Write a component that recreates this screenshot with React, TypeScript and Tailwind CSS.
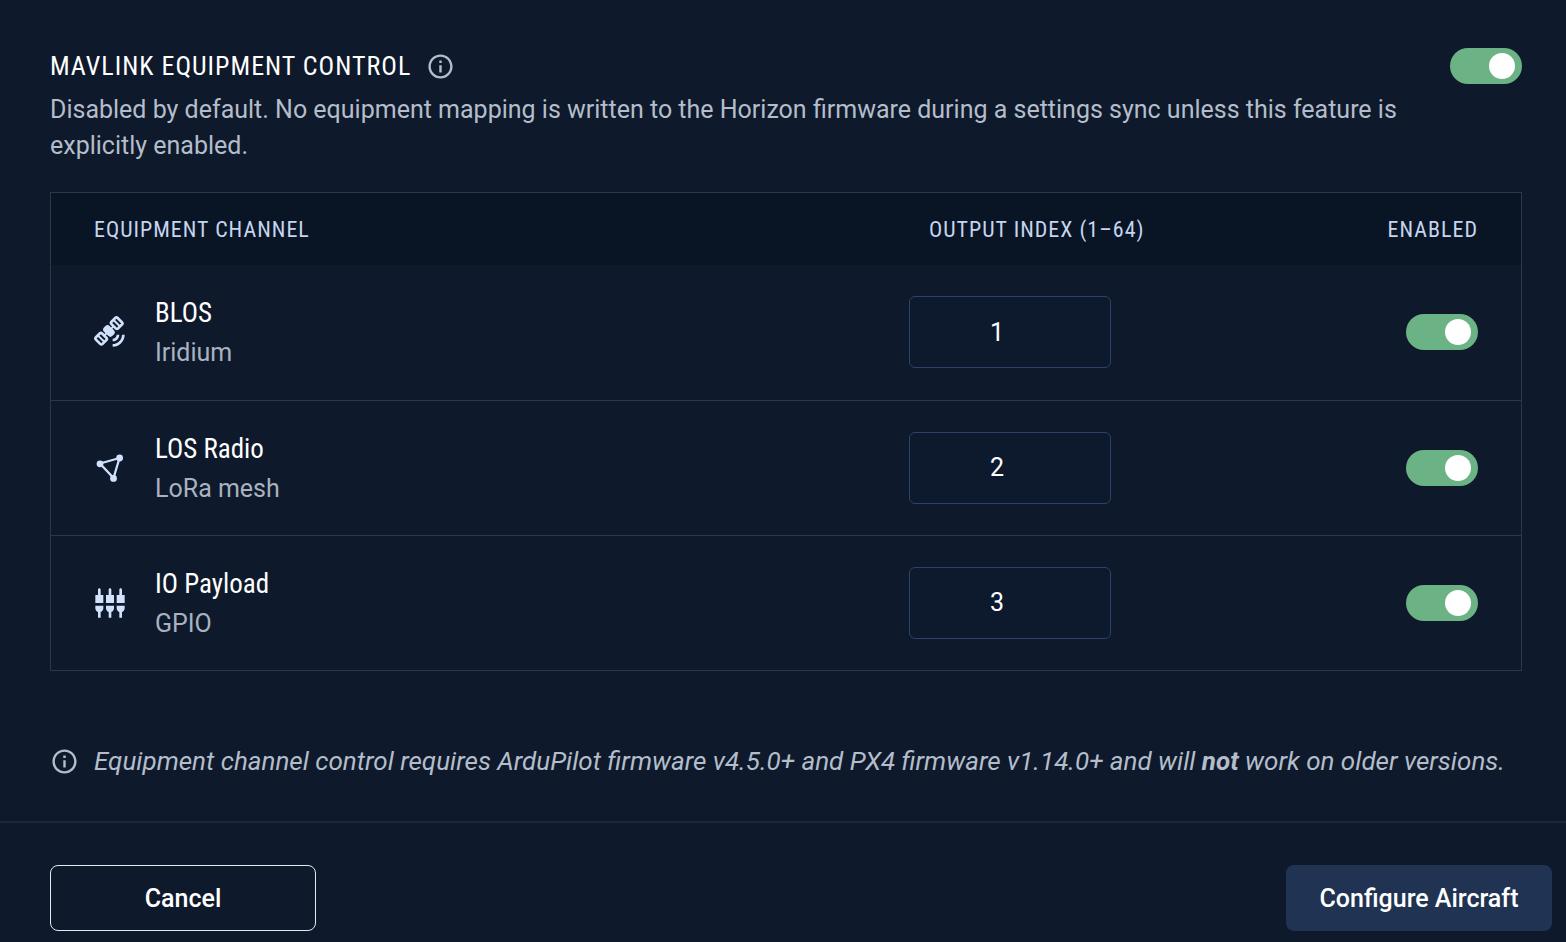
import { useState } from "react";
import type { ReactNode } from "react";
import { MdInfoOutline, MdSatelliteAlt, MdSettingsInputComponent } from "react-icons/md";

type Channel = {
  id: string;
  name: string;
  detail: string;
  index: string;
  icon: ReactNode;
};

function MeshIcon() {
  return (
    <svg viewBox="0 0 32 32" className="size-8" fill="none" stroke="currentColor" strokeWidth="2.2">
      <path d="M6 11.5 25.5 6 19.5 26Z" />
      <g fill="currentColor" stroke="none">
        <circle cx="6" cy="11.8" r="3.4" />
        <circle cx="25.6" cy="6" r="3.4" />
        <circle cx="19.5" cy="26.4" r="3.4" />
      </g>
    </svg>
  );
}

const channels: Channel[] = [
  { id: "blos", name: "BLOS", detail: "Iridium", index: "1", icon: <MdSatelliteAlt className="size-8" /> },
  { id: "los", name: "LOS Radio", detail: "LoRa mesh", index: "2", icon: <MeshIcon /> },
  { id: "io", name: "IO Payload", detail: "GPIO", index: "3", icon: <MdSettingsInputComponent className="size-8" /> },
];

function Toggle({ label }: { label: string }) {
  const [on, setOn] = useState(true);
  return (
    <input
      type="checkbox"
      role="switch"
      aria-label={label}
      checked={on}
      onChange={(e) => setOn(e.target.checked)}
      className="ml-auto flex h-9 w-18 shrink-0 cursor-pointer appearance-none items-center rounded-full bg-slate-600 px-[7px] before:size-[26px] before:rounded-full before:bg-white checked:justify-end checked:bg-[#6bb385]"
    />
  );
}

function ChannelRow({ channel }: { channel: Channel }) {
  const [value, setValue] = useState(channel.index);
  return (
    <tr className="h-[135px] border-b border-[#2b3848] last:border-b-0">
      <td className="pl-[43px]">
        <div className="flex items-center gap-[29px] text-[#d3e2fc]">
          {channel.icon}
          <div className="pt-0.5">
            <p className="font-['Roboto_Condensed','Liberation_Sans_Narrow',Roboto,sans-serif] text-[27px] leading-[39px] text-white">
              {channel.name}
            </p>
            <p className="leading-[39px] text-[#a9b2c0]">{channel.detail}</p>
          </div>
        </div>
      </td>
      <td>
        <input
          type="text"
          inputMode="numeric"
          aria-label={`${channel.name} output index`}
          value={value}
          onChange={(e) => setValue(e.target.value)}
          className="block h-18 w-[202px] rounded-md border border-[#2c4268] bg-[#0d1a2e] pr-[26px] text-center text-white"
        />
      </td>
      <td className="pr-[43px]">
        <Toggle label={`${channel.name} enabled`} />
      </td>
    </tr>
  );
}

export default function App() {
  return (
    <div className="flex min-h-screen flex-col bg-[#0e192b] font-[Roboto,sans-serif] text-[25px] text-[#b4bdca]">
      <main className="pt-12 pr-11 pb-[42px] pl-[50px]">
        <header className="flex items-start justify-between">
          <div>
            <div className="flex h-9 items-center gap-[15px]">
              <h1 className="font-['Roboto_Condensed','Liberation_Sans_Narrow',Roboto,sans-serif] text-[26px] tracking-[1px] text-white">
                MAVLINK EQUIPMENT CONTROL
              </h1>
              <MdInfoOutline className="size-[29px]" />
            </div>
            <p className="mt-2 leading-9">
              Disabled by default. No equipment mapping is written to the Horizon firmware during a settings sync unless
              this feature is explicitly enabled.
            </p>
          </div>
          <Toggle label="MAVLink equipment control" />
        </header>

        <div className="mt-7 border border-[#2b3848]">
          <table className="w-full table-fixed border-collapse">
            <thead>
              <tr className="h-18 bg-[#091524] text-left font-['Roboto_Condensed','Liberation_Sans_Narrow',Roboto,sans-serif] text-[22px] tracking-[1px] text-[#c6d5ef]">
                <th scope="col" className="pl-[43px] font-normal">EQUIPMENT CHANNEL</th>
                <th scope="col" className="w-[306px] pl-5 font-normal">OUTPUT INDEX (1–64)</th>
                <th scope="col" className="w-[306px] pr-[43px] text-right font-normal">ENABLED</th>
              </tr>
            </thead>
            <tbody>
              {channels.map((channel) => (
                <ChannelRow key={channel.id} channel={channel} />
              ))}
            </tbody>
          </table>
        </div>

        <div className="mt-18 flex items-center gap-[15px]">
          <MdInfoOutline className="size-[29px] shrink-0" />
          <p className="text-[26px] leading-9 italic">
            Equipment channel control requires ArduPilot firmware v4.5.0+ and PX4 firmware v1.14.0+ and will{" "}
            <strong className="font-bold">not</strong> work on older versions.
          </p>
        </div>
      </main>

      <footer className="flex justify-between border-t-2 border-[#1c2737] pt-[42px] pr-3.5 pb-2 pl-[50px] font-medium text-white">
        <button type="button" className="h-[66px] w-[266px] rounded-lg border border-[#e5eaf0] pt-0.5">
          Cancel
        </button>
        <button type="button" className="h-[66px] w-[266px] rounded-lg bg-[#203352] pt-0.5">
          Configure Aircraft
        </button>
      </footer>
    </div>
  );
}
